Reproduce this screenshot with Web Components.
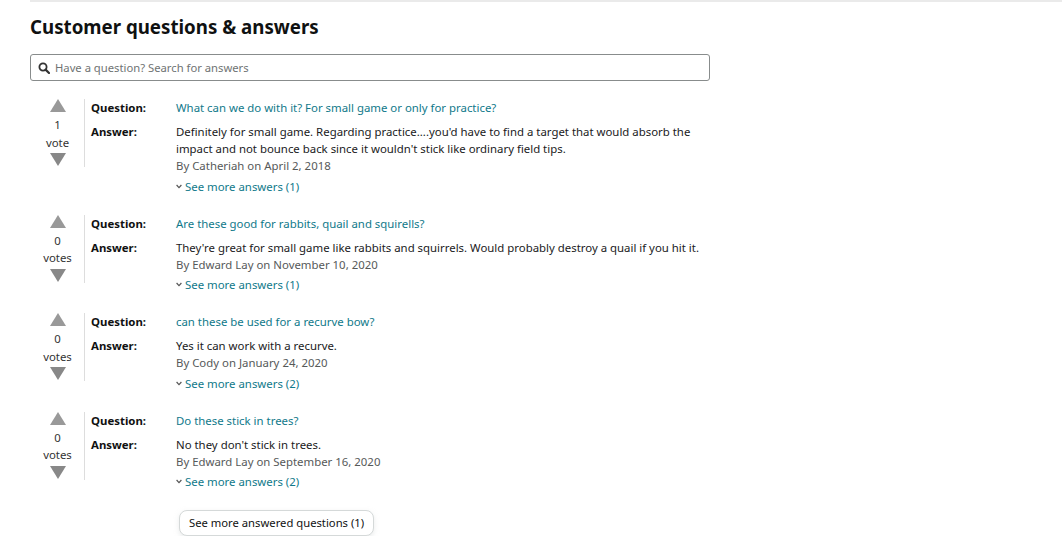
<!DOCTYPE html>
<html>
<head>
<meta charset="utf-8">
<style>
  html, body { margin: 0; background: #fff; }
  body { font-family: "Noto Sans", "Open Sans", sans-serif; font-size: 11.4px; color: #1a1a1c; }
</style>
</head>
<body>
<qa-section heading="Customer questions &amp; answers">
  <qa-item votes="1" question="What can we do with it? For small game or only for practice?" byline="By Catheriah on April 2, 2018" more="See more answers (1)">Definitely for small game. Regarding practice....you'd have to find a target that would absorb the<br>impact and not bounce back since it wouldn't stick like ordinary field tips.</qa-item>
  <qa-item votes="0" question="Are these good for rabbits, quail and squirells?" byline="By Edward Lay on November 10, 2020" more="See more answers (1)">They're great for small game like rabbits and squirrels. Would probably destroy a quail if you hit it.</qa-item>
  <qa-item votes="0" question="can these be used for a recurve bow?" byline="By Cody on January 24, 2020" more="See more answers (2)">Yes it can work with a recurve.</qa-item>
  <qa-item votes="0" question="Do these stick in trees?" byline="By Edward Lay on September 16, 2020" more="See more answers (2)">No they don't stick in trees.</qa-item>
</qa-section>
<script>
class QaSection extends HTMLElement {
  constructor() {
    super();
    this.attachShadow({ mode: "open" });
    this.shadowRoot.innerHTML = `
    <style>
      :host { display: block; padding: 0 0 0 30px; }
      .rule { height: 2px; background: #eaeaea; }
      h2 { margin: 12px 0 0; font-size: 18.7px; line-height: 26px; font-weight: 700; color: #0f1111; }
      .search { display: flex; align-items: center; gap: 5px; box-sizing: border-box; width: 680px; height: 27px; margin: 14px 0 18px; padding: 0 7px; border: 1px solid #888c8c; border-radius: 3px; color: #6f7373; font-size: 11.25px; }
      .search svg { flex: none; }
      .list { display: flex; flex-direction: column; }
      .more { margin-left: 149px; }
      button { display: block; box-sizing: border-box; height: 26px; padding: 0 9px 2px; font: inherit; font-size: 11.25px; color: #0f1111; background: #fff; border: 1px solid #d5d9d9; border-radius: 8px; box-shadow: 0 2px 5px rgba(213,217,217,.5); }
    </style>
    <div class="rule"></div>
    <h2></h2>
    <div class="search">
      <svg width="12" height="12" viewBox="0 0 12 12"><circle cx="5" cy="5" r="3.6" fill="none" stroke="#333" stroke-width="1.8"/><path d="M7.6 7.6 11 11" stroke="#333" stroke-width="2.2" stroke-linecap="round"/></svg>
      <span>Have a question? Search for answers</span>
    </div>
    <div class="list"><slot></slot></div>
    <div class="more"><button>See more answered questions (1)</button></div>
    `;
    this.shadowRoot.querySelector("h2").textContent = this.getAttribute("heading");
  }
}

class QaItem extends HTMLElement {
  constructor() {
    super();
    this.attachShadow({ mode: "open" });
    const votes = this.getAttribute("votes");
    this.shadowRoot.innerHTML = `
    <style>
      :host { display: grid; grid-template-columns: 54px 92px 1fr; line-height: 17px; margin-bottom: 20px; }
      .votes { display: flex; flex-direction: column; align-items: center; height: 68px; padding-left: 1px; box-sizing: border-box; color: #333; text-align: center; }
      .votes span { display: block; line-height: 17.5px; }
      .count { margin-top: 4px; }
      .up, .down { width: 0; height: 0; border-left: 8.5px solid transparent; border-right: 8.5px solid transparent; }
      .up { border-bottom: 13px solid #999; }
      .down { border-top: 13px solid #888; margin-top: 2px; }
      .labels { border-left: 1px solid #ddd; padding-left: 6px; height: 68px; font-weight: 700; color: #0f1111; }
      .labels div + div { margin-top: 7px; }
      .body { min-width: 0; }
      .q { color: #10798a; margin-bottom: 7px; }
      .by { color: #565959; }
      .link { color: #10798a; margin-top: 3.5px; display: flex; align-items: center; gap: 3px; }
    </style>
    <div class="votes">
      <div class="up"></div>
      <span class="count">${votes}</span>
      <span>${votes === "1" ? "vote" : "votes"}</span>
      <div class="down"></div>
    </div>
    <div class="labels"><div>Question:</div><div>Answer:</div></div>
    <div class="body">
      <div class="q">${this.getAttribute("question")}</div>
      <div><slot></slot></div>
      <div class="by">${this.getAttribute("byline")}</div>
      <div class="link">
        <svg width="6" height="5" viewBox="0 0 6 5"><path d="M.6 1 3 3.6 5.4 1" fill="none" stroke="#555" stroke-width="1.2"/></svg>
        <span>${this.getAttribute("more")}</span>
      </div>
    </div>
    `;
  }
}

customElements.define("qa-section", QaSection);
customElements.define("qa-item", QaItem);
</script>
</body>
</html>
